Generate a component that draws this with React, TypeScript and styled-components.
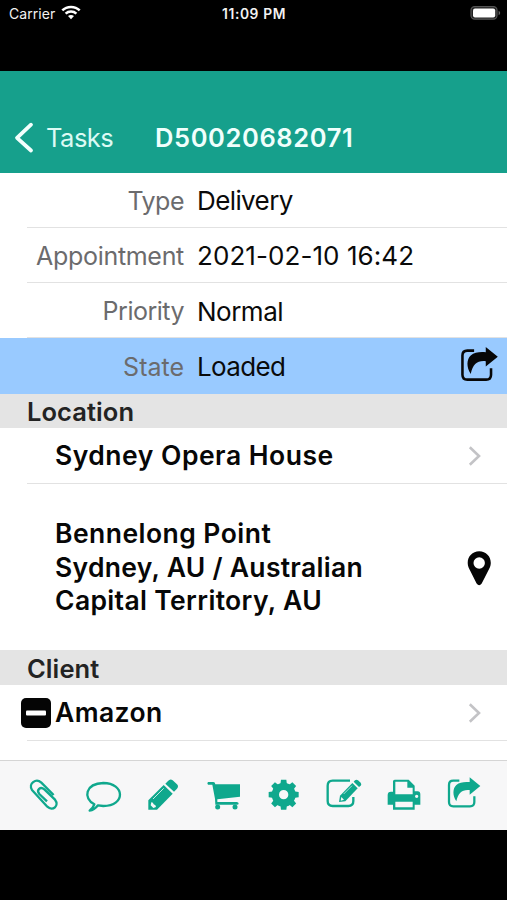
import React from "react";
import styled, { createGlobalStyle } from "styled-components";

const GlobalStyle = createGlobalStyle`
  * { box-sizing: border-box; }
  body { margin: 0; background: #000; font-family: Inter, "Liberation Sans", sans-serif; }
  svg { display: block; flex: none; }
`;

const Screen = styled.div`
  width: 507px;
  height: 900px;
  background: #000;
  display: flex;
  flex-direction: column;
  overflow: hidden;
`;

const StatusBar = styled.div`
  height: 70.5px;
  flex: none;
  display: grid;
  grid-template-columns: 1fr auto 1fr;
  align-items: start;
  padding: 4px 6px 0 9px;
  color: #f2f2f2;
  font-size: 14px;
  line-height: 20px;
`;

const Carrier = styled.div`
  display: flex;
  gap: 6px;
  letter-spacing: 0.05px;
`;

const Clock = styled.div`
  font-weight: 600;
  font-size: 13.8px;
  letter-spacing: 0.62px;
  margin-right: 2px;
`;

const Battery = styled.div`
  justify-self: end;
`;

const Header = styled.header`
  height: 102px;
  flex: none;
  display: flex;
  align-items: flex-end;
  background: #16a08c;
  color: #f0fffc;
  padding: 0 0 18px 14px;
`;

const BackLink = styled.div`
  width: 141px;
  display: flex;
  align-items: center;
  gap: 12px;
  font-size: 25.5px;
  line-height: 34px;
  letter-spacing: -0.5px;
  color: #dcfaf4;
`;

const Title = styled.div`
  font-size: 25.5px;
  line-height: 34px;
  font-weight: 600;
  letter-spacing: 0.6px;
`;

const Content = styled.main`
  height: 587px;
  flex: none;
  background: #fff;
  overflow: hidden;
`;

const Field = styled.div<{ $active?: boolean }>`
  height: 55.3px;
  display: flex;
  background: ${(p) => (p.$active ? "#99caff" : "#fff")};
  padding-left: 27px;
`;

const FieldInner = styled.div<{ $line?: boolean }>`
  flex: 1;
  display: flex;
  align-items: center;
  gap: 13px;
  padding: 2px 8px 0 0;
  border-bottom: 1px solid ${(p) => (p.$line ? "#e2e2e2" : "transparent")};
`;

const Label = styled.div<{ $track: number }>`
  width: 157px;
  text-align: right;
  font-size: 25px;
  color: #6b6b6d;
  letter-spacing: ${(p) => p.$track}px;
  white-space: nowrap;
`;

const Value = styled.div<{ $track: number }>`
  flex: 1;
  font-size: 26px;
  color: #0a0a0a;
  letter-spacing: ${(p) => p.$track}px;
  white-space: nowrap;
`;

const SectionTitle = styled.div`
  height: 34.7px;
  background: #e4e4e4;
  padding: 1.4px 0 0 27px;
  font-size: 25.5px;
  line-height: 34px;
  font-weight: 600;
  letter-spacing: 0.08px;
  color: #232323;
`;

const LinkRow = styled.div<{ $marked?: boolean }>`
  height: 55.5px;
  margin-left: 27px;
  display: flex;
  align-items: center;
  justify-content: space-between;
  padding: 1px 25px 0 ${(p) => (p.$marked ? 0 : 28)}px;
  border-bottom: 1px solid #e2e2e2;
`;

const Named = styled.div`
  display: flex;
  align-items: center;
  gap: 4px;
  margin-left: -6px;
`;

const Strong = styled.div<{ $track: number }>`
  font-size: 26.5px;
  line-height: 33.7px;
  font-weight: 600;
  color: #070707;
  letter-spacing: ${(p) => p.$track}px;
  white-space: nowrap;
`;

const AddressRow = styled.div`
  height: 166.5px;
  display: flex;
  align-items: center;
  justify-content: space-between;
  padding: 1px 15px 0 55px;
`;

const Toolbar = styled.footer`
  height: 70px;
  flex: none;
  display: flex;
  padding: 4px 0 0 14px;
  background: #f7f7f8;
  border-top: 1px solid #d5d5d5;
`;

const TEAL = "#0fa88d";

const WifiIcon = () => (
  <svg width="20" height="16" viewBox="0 0 20 16" fill="none" stroke="#fff" strokeWidth="2.5">
    <path d="M1.3 6.4C6 1.7 14 1.7 18.7 6.4M4.6 9.6C7.6 6.8 12.4 6.8 15.4 9.6" />
    <path d="M7 12C8.8 10.5 11.2 10.5 13 12L10 15.3Z" fill="#fff" stroke="none" />
  </svg>
);

const BatteryIcon = () => (
  <svg width="31" height="18" viewBox="470 4 31 18">
    <rect x="471" y="6.6" width="26" height="12.6" rx="3.6" fill="#222" stroke="#555" strokeWidth="1.2" />
    <rect x="473" y="8.6" width="22.2" height="8.8" rx="2" fill="#fff" />
    <path d="M498.6 10.8Q501.8 13 498.6 15.3Z" fill="#666" />
  </svg>
);

const BackIcon = () => (
  <svg width="20" height="34" viewBox="14 121 20 34" fill="none" stroke="#f3fffd" strokeWidth="3.8" strokeLinecap="round" strokeLinejoin="round">
    <path d="M31 124.7L17 137.8L31 150.5" />
  </svg>
);

const ChevronIcon = () => (
  <svg width="14" height="22" viewBox="468 445 14 22" fill="none" stroke="#c3c3c6" strokeWidth="2.6">
    <path d="M469.8 447.3L479 456L469.8 464.7" />
  </svg>
);

const SharePaths = ({ color }: { color: string }) => (
  <>
    <path d="M238 47H220Q207 47 207 60V111Q207 124 220 124H270Q283 124 283 111V94" fill="none" stroke={color} strokeWidth="6.8" />
    <path d="M269 37L301 63L269 89V75C246 73 235 82 229 109C217 91 218 70 229 60C239 51 252 50 269 51Z" fill={color} />
  </>
);

const StateIcon = () => (
  <svg width="40" height="44" viewBox="198 32 106 117">
    <SharePaths color="#070707" />
  </svg>
);

const PinIcon = () => (
  <svg width="26" height="36" viewBox="466 549 26 36">
    <path fillRule="evenodd" fill="#050505" d="M479.2 550.3C472.5 550.3 467.7 555.4 467.7 562C467.7 565.2 469 567.3 470.2 569.7L476.6 582.4Q479.2 586 481.7 582.4L488.2 569.7C489.4 567.3 490.8 565.2 490.8 562C490.8 555.4 486 550.3 479.2 550.3ZM479.2 556.3A5.7 5.7 0 1 1 479.2 567.7A5.7 5.7 0 1 1 479.2 556.3Z" />
  </svg>
);

const MinusIcon = () => (
  <svg width="30" height="30" viewBox="0 0 30 30">
    <rect width="30" height="30" rx="5" fill="#050505" />
    <rect x="5" y="12.4" width="20" height="5.2" rx="1" fill="#fff" />
  </svg>
);

const ToolIcon = ({ shift, children }: { shift?: boolean; children: React.ReactNode }) => (
  <svg width="60" height="60" viewBox={`${shift ? 162 : -18} 0 180 180`} fill={TEAL}>
    {children}
  </svg>
);

const Line = styled.path`
  fill: none;
  stroke: ${TEAL};
  stroke-width: 7px;
  stroke-linejoin: round;
`;

const teeth = [0, 45, 90, 135, 180, 225, 270, 315];

export default function App() {
  return (
    <Screen>
      <GlobalStyle />
      <StatusBar>
        <Carrier>Carrier<WifiIcon /></Carrier>
        <Clock>11:09 PM</Clock>
        <Battery><BatteryIcon /></Battery>
      </StatusBar>
      <Header>
        <BackLink><BackIcon />Tasks</BackLink>
        <Title>D50020682071</Title>
      </Header>
      <Content>
        <Field><FieldInner $line><Label $track={-0.5}>Type</Label><Value $track={-0.6}>Delivery</Value></FieldInner></Field>
        <Field><FieldInner $line><Label $track={-0.3}>Appointment</Label><Value $track={0.07}>2021-02-10 16:42</Value></FieldInner></Field>
        <Field><FieldInner $line><Label $track={-0.5}>Priority</Label><Value $track={-0.5}>Normal</Value></FieldInner></Field>
        <Field $active><FieldInner><Label $track={0}>State</Label><Value $track={-0.65}>Loaded</Value><StateIcon /></FieldInner></Field>
        <SectionTitle>Location</SectionTitle>
        <LinkRow><Strong $track={0.5}>Sydney Opera House</Strong><ChevronIcon /></LinkRow>
        <AddressRow>
          <div>
            <Strong $track={0.46}>Bennelong Point</Strong>
            <Strong $track={0.29}>Sydney, AU / Australian</Strong>
            <Strong $track={0.35}>Capital Territory, AU</Strong>
          </div>
          <PinIcon />
        </AddressRow>
        <SectionTitle>Client</SectionTitle>
        <LinkRow $marked><Named><MinusIcon /><Strong $track={0.4}>Amazon</Strong></Named><ChevronIcon /></LinkRow>
      </Content>
      <Toolbar>
        <ToolIcon>
          <Line d="M101 90L64 53C48 38 24 56 36 75L82 125C98 140 119 122 105 104L73 73C61 63 48 75 58 87L81 109" />
        </ToolIcon>
        <ToolIcon shift>
          <Line d="M223 118C188 99 196 56 250 54C315 54 318 123 250 123L234 121C226 131 218 136 209 137C217 130 221 124 223 118Z" />
        </ToolIcon>
        <ToolIcon>
          <path d="M76 56L84 48Q91 40 98 46L111 58Q117 64 111 71L102 80Z" />
          <path d="M71 60L98 86L51 134H25V106Z" />
          <path d="M39 102L71 70" stroke="#c7ece4" strokeWidth="3" />
          <path d="M34 112Q39 111 41 118Q48 120 48 126L40 129L32 121Z" fill="#f7f7f8" />
        </ToolIcon>
        <ToolIcon shift>
          <path d="M204 51H220Q225 51 226 58H300V95L232 103V111H290Q296 111 296 116Q296 119 290 119H226L225 101L217 59H204Q200 55 204 51Z" />
          <circle cx="233" cy="126" r="7.5" />
          <circle cx="285" cy="126" r="7.5" />
        </ToolIcon>
        <ToolIcon>
          {teeth.map((a) => (
            <path key={a} d="M61 60L63 44H79L81 60Z" transform={`rotate(${a} 71 89)`} />
          ))}
          <circle cx="71" cy="89" r="25" fill="none" stroke={TEAL} strokeWidth="22" />
        </ToolIcon>
        <ToolIcon shift>
          <Line d="M270 47H218Q203 47 203 62V108Q203 123 218 123H265Q280 123 280 108V96" />
          <path d="M281 50L285 46Q289 42 294 46L302 53Q306 58 302 62L297 66Z" />
          <path d="M277 54L293 70L256 109L237 111L240 92Z" />
          <path d="M251 87L276 62" stroke="#c7ece4" strokeWidth="2.5" />
          <path d="M244 96L252 104L242 107Z" fill="#f7f7f8" />
        </ToolIcon>
        <ToolIcon>
          <path fillRule="evenodd" d="M44 44H86L104 62V79H113Q121 79 121 88V119H104V134H39V119H23V90Q23 80 33 80H39V49Q39 44 44 44ZM46 50V88H98V68H82V50ZM46 110V127H98V110ZM110 89A5 5 0 1 0 110 99A5 5 0 1 0 110 89Z" />
        </ToolIcon>
        <ToolIcon shift><SharePaths color={TEAL} /></ToolIcon>
      </Toolbar>
    </Screen>
  );
}
